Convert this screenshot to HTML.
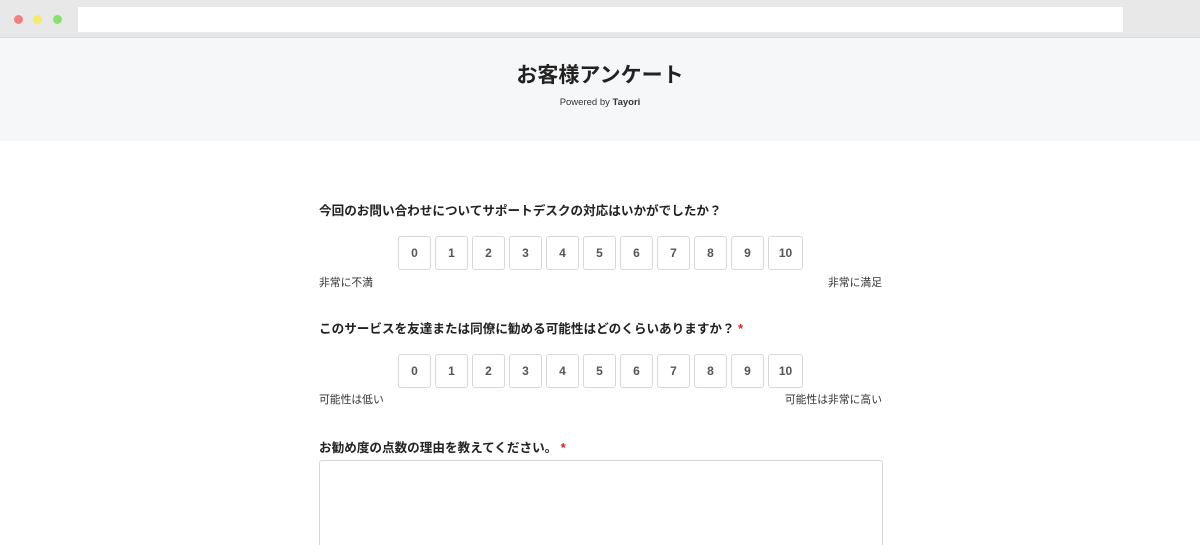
<!DOCTYPE html>
<html><head><meta charset="utf-8"><style>
*{box-sizing:border-box;margin:0;padding:0}
html,body{width:1200px;height:545px;overflow:hidden}
body{background:#fff;font-family:"Liberation Sans","Noto Sans CJK JP",sans-serif;color:#222;position:relative}
.bar{position:absolute;left:0;top:0;width:1200px;height:38px;background:#e8e8e8;border-bottom:1px solid #dcdcdc}
.dot{position:absolute;top:15px;width:9px;height:9px;border-radius:50%}
.url{position:absolute;left:78px;top:7px;width:1045px;height:25px;background:#fff}
.hdr{position:absolute;left:0;top:38px;width:1200px;height:103px;background:#f6f7f9}
.t{position:absolute;width:100%;text-align:center}
.q{position:absolute;left:319px;font-size:12.6px;font-weight:bold}
.q span{color:#e02020}
.row{position:absolute;left:398px;display:flex}
.row div{width:33px;height:34px;margin-right:4px;border:1px solid #d8d8d8;border-radius:3px;font-size:12px;color:#555;font-weight:bold;display:flex;align-items:center;justify-content:center;font-family:"Liberation Sans",sans-serif}
.row div:last-child{width:35px}
.l{position:absolute;font-size:10.8px;color:#333}
</style></head><body>
<div class="bar"><div class="dot" style="left:14px;background:#f08080"></div><div class="dot" style="left:33px;background:#f5ea6a"></div><div class="dot" style="left:53px;background:#88e070"></div><div class="url"></div></div>
<div class="hdr">
<div class="t" style="top:21px;font-size:21px;font-weight:bold">お客様アンケート</div>
<div class="t" style="top:59px;font-size:9.5px;color:#333">Powered by <b>Tayori</b></div>
</div>
<div class="q" style="top:200px">今回のお問い合わせについてサポートデスクの対応はいかがでしたか？</div>
<div class="row" style="top:236px"><div>0</div><div>1</div><div>2</div><div>3</div><div>4</div><div>5</div><div>6</div><div>7</div><div>8</div><div>9</div><div>10</div></div>
<div class="l" style="left:319px;top:274px">非常に不満</div>
<div class="l" style="right:318px;top:274px">非常に満足</div>
<div class="q" style="top:318px">このサービスを友達または同僚に勧める可能性はどのくらいありますか？ <span>*</span></div>
<div class="row" style="top:354px"><div>0</div><div>1</div><div>2</div><div>3</div><div>4</div><div>5</div><div>6</div><div>7</div><div>8</div><div>9</div><div>10</div></div>
<div class="l" style="left:319px;top:391px">可能性は低い</div>
<div class="l" style="right:318px;top:391px">可能性は非常に高い</div>
<div class="q" style="top:437px">お勧め度の点数の理由を教えてください。 <span>*</span></div>
<div style="position:absolute;left:319px;top:460px;width:564px;height:100px;border:1px solid #d8d8d8;border-radius:3px"></div>
</body></html>
